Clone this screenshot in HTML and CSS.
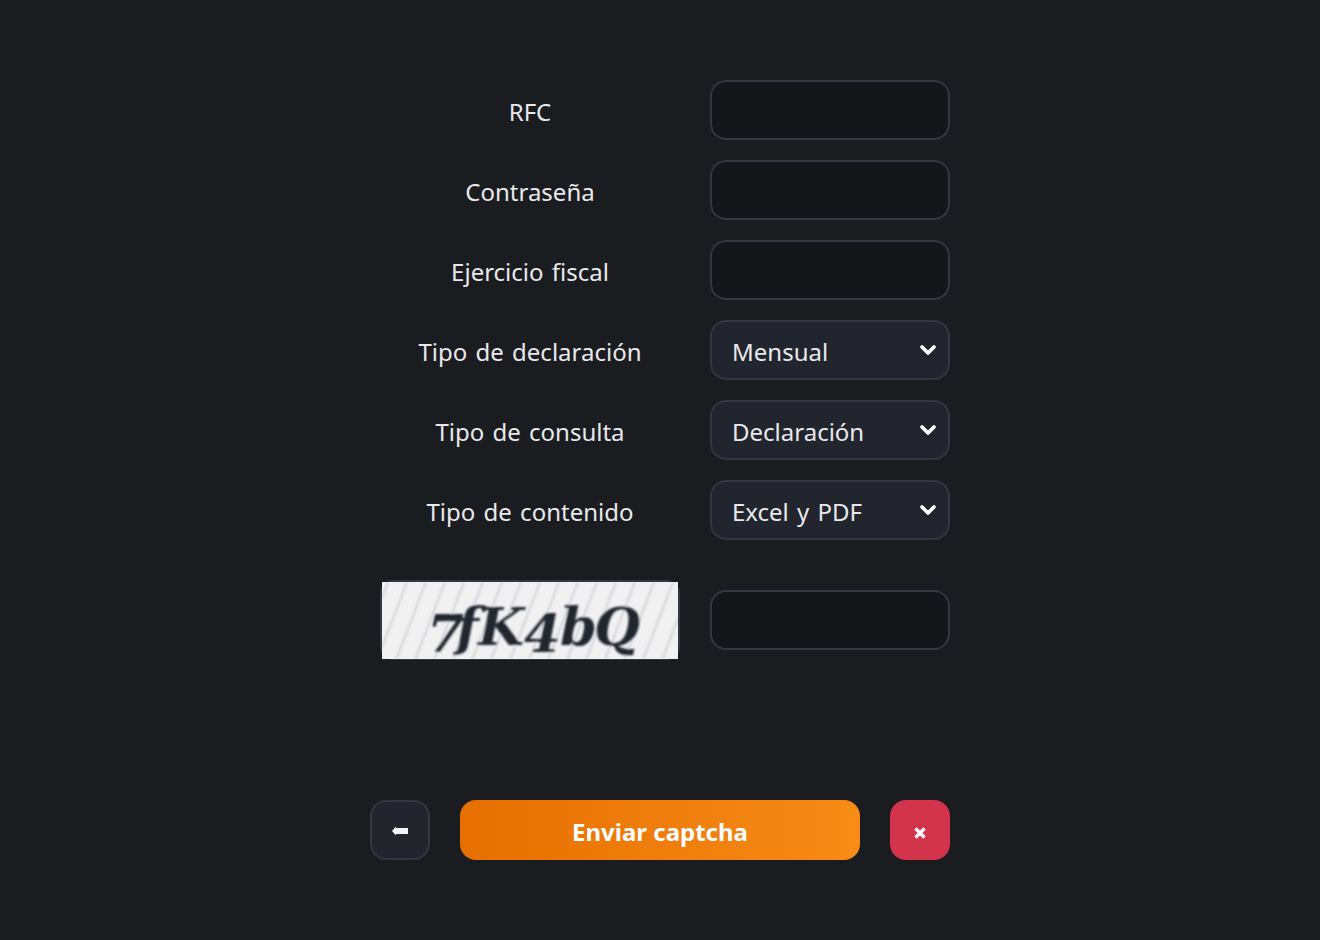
FILE: index.html
```html
<!DOCTYPE html>
<html lang="es">
<head>
    <meta charset="UTF-8">
    <meta name="viewport" content="width=device-width, initial-scale=1.0">
    <title>Enviar captcha</title>
    <link rel="stylesheet" href="styles.css">
</head>
<body>
    <form class="panel">
        <div class="fields">
            <label class="field-label">RFC</label>
            <div class="input"></div>

            <label class="field-label">Contraseña</label>
            <div class="input"></div>

            <label class="field-label">Ejercicio fiscal</label>
            <div class="input"></div>

            <label class="field-label">Tipo de declaración</label>
            <div class="select">
                <span>Mensual</span>
                <svg class="chevron" viewBox="0 0 16 10"><path d="M2 2l6 6 6-6" fill="none" stroke="#fff" stroke-width="3.6" stroke-linecap="round" stroke-linejoin="round"/></svg>
            </div>

            <label class="field-label">Tipo de consulta</label>
            <div class="select">
                <span>Declaración</span>
                <svg class="chevron" viewBox="0 0 16 10"><path d="M2 2l6 6 6-6" fill="none" stroke="#fff" stroke-width="3.6" stroke-linecap="round" stroke-linejoin="round"/></svg>
            </div>

            <label class="field-label">Tipo de contenido</label>
            <div class="select">
                <span>Excel y PDF</span>
                <svg class="chevron" viewBox="0 0 16 10"><path d="M2 2l6 6 6-6" fill="none" stroke="#fff" stroke-width="3.6" stroke-linecap="round" stroke-linejoin="round"/></svg>
            </div>
        </div>

        <div class="captcha-row">
            <div class="captcha-frame">
                <svg class="captcha" viewBox="0 0 296 77">
                    <defs>
                        <pattern id="hatch" width="19" height="77" patternUnits="userSpaceOnUse" patternTransform="skewX(-21)">
                            <rect x="5" width="2" height="77" fill="#d2d2d8"/>
                        </pattern>
                        <filter id="soft" x="-5%" y="-5%" width="110%" height="110%">
                            <feGaussianBlur stdDeviation="0.8"/>
                        </filter>
                    </defs>
                    <rect width="296" height="77" fill="#f1f1f2"/>
                    <g filter="url(#soft)">
                        <rect width="296" height="77" fill="url(#hatch)"/>
                        <text class="captcha-text" x="45 74 96 142 178 212" y="70 63 63 70 63 63">7fK4bQ</text>
                    </g>
                </svg>
            </div>
            <div class="input"></div>
        </div>

        <div class="actions">
            <button type="button" class="btn-back">
                <svg viewBox="0 0 16 10" width="16" height="10"><path d="M0 5L4 .5V2H16V8H4V9.5Z" fill="#f4f4f6"/></svg>
            </button>
            <button type="button" class="btn-send">Enviar captcha</button>
            <button type="button" class="btn-close">
                <svg viewBox="0 0 14 12" width="14" height="12"><path d="M2.5 1.5L11.5 10.5M11.5 1.5L2.5 10.5" fill="none" stroke="#fff" stroke-width="3.4"/></svg>
            </button>
        </div>
    </form>
</body>
</html>
```

FILE: styles.css
```css
* {
    box-sizing: border-box;
}
body {
    margin: 0;
    height: 940px;
    background-color: #1a1c20;
    color: #e8e9ec;
    font-family: "Noto Sans", sans-serif;
    font-size: 24px;
    word-spacing: 2px;
    overflow: hidden;
}
.panel {
    width: 580px;
    margin: 0 auto;
    padding-top: 80px;
}
.fields {
    display: grid;
    grid-template-columns: 320px 240px;
    grid-auto-rows: 60px;
    gap: 20px;
}
.field-label {
    display: flex;
    align-items: center;
    justify-content: center;
    padding-top: 2px;
}
.input,
.select {
    height: 60px;
    border: 2px solid #343741;
    border-radius: 16px;
}
.input {
    background-color: #15161a;
}
.select {
    display: flex;
    align-items: center;
    justify-content: space-between;
    padding: 2px 12px 0 20px;
    background-color: #22252d;
}
.chevron {
    width: 16px;
    height: 10px;
    margin-top: -2px;
}
.captcha-row {
    display: grid;
    grid-template-columns: 320px 240px;
    gap: 20px;
    align-items: center;
    margin-top: 40px;
}
.captcha-frame {
    justify-self: center;
    width: 300px;
    height: 80px;
    padding: 2px 2px 1px;
    border-radius: 14px;
    box-shadow: inset 0 0 0 2px #343741;
}
.captcha {
    display: block;
    width: 296px;
    height: 77px;
}
.captcha-text {
    font-family: "DejaVu Serif", serif;
    font-size: 53px;
    font-style: italic;
    font-weight: bold;
    fill: #22262f;
}
.actions {
    display: flex;
    justify-content: space-between;
    margin-top: 140px;
}
.actions button {
    display: flex;
    align-items: center;
    justify-content: center;
    height: 60px;
    padding: 0;
    border-radius: 16px;
    font-family: "Noto Sans", sans-serif;
    color: #fff;
}
.btn-back {
    width: 60px;
    border: 2px solid #343741;
    background-color: #22252d;
}
.btn-back svg {
    margin-top: 2px;
}
.actions .btn-send {
    width: 400px;
    border: none;
    padding-top: 2px;
    background: linear-gradient(90deg, #e66f00, #f78c17);
    font-size: 24px;
    font-weight: bold;
}
.btn-close {
    width: 60px;
    border: none;
    background-color: #d1344b;
}
.btn-close svg {
    margin-top: 6px;
}
```
